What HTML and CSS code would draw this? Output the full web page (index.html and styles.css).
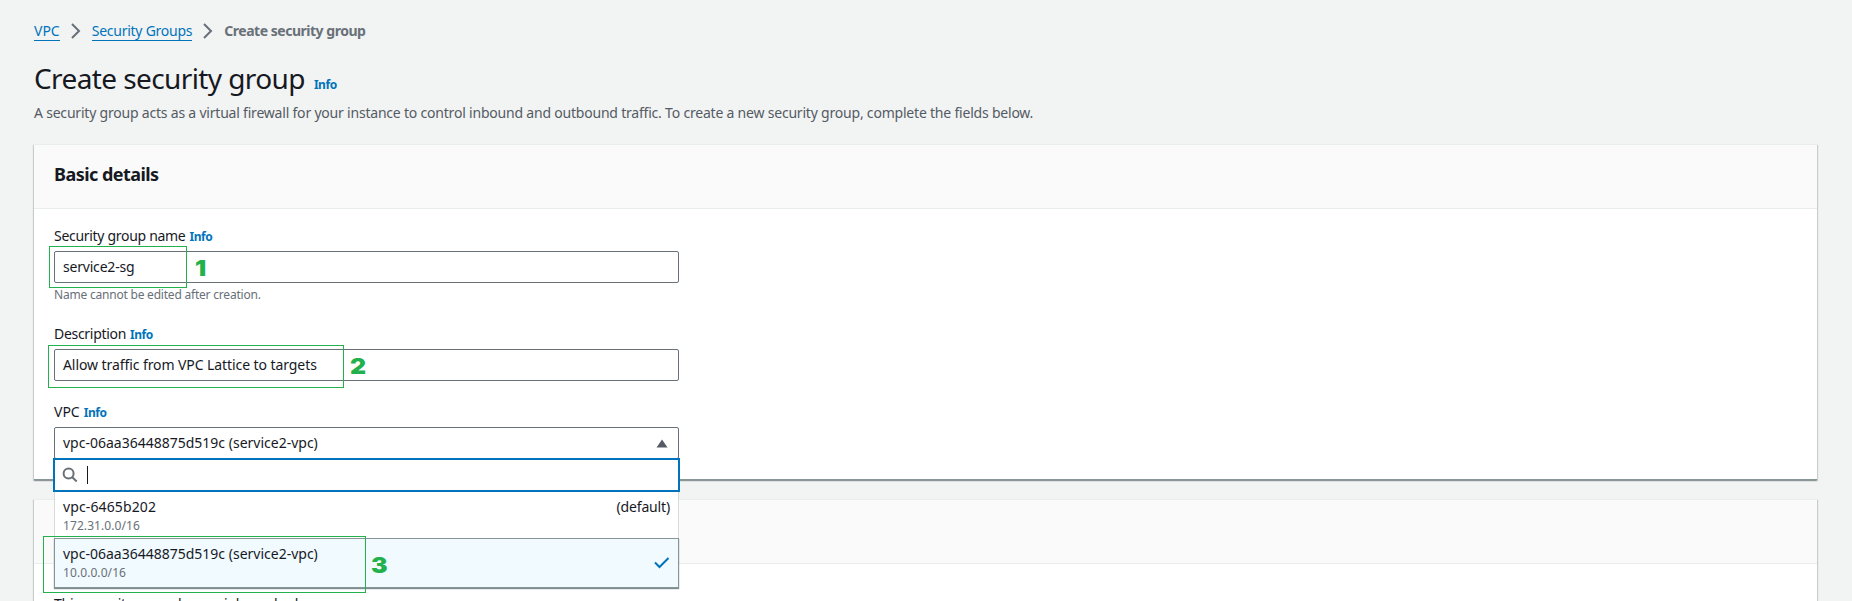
FILE: index.html
```html
<!DOCTYPE html>
<html lang="en">
<head>
<meta charset="utf-8">
<title>Create security group</title>
<link rel="stylesheet" href="styles.css">
</head>
<body>
<main class="page">
  <nav class="breadcrumbs">
    <a class="crumb crumb-vpc">VPC</a>
    <svg class="chevron" width="10" height="16" viewBox="0 0 10 16"><path d="M1 1l7 7-7 7"/></svg>
    <a class="crumb crumb-groups">Security Groups</a>
    <svg class="chevron" width="10" height="16" viewBox="0 0 10 16"><path d="M1 1l7 7-7 7"/></svg>
    <span class="current">Create security group</span>
  </nav>
  <header class="heading">
    <h1><span class="title">Create security group</span><a class="info">Info</a></h1>
    <p class="intro">A security group acts as a virtual firewall for your instance to control inbound and outbound traffic. To create a new security group, complete the fields below.</p>
  </header>

  <section class="card basic">
    <div class="card-header"><h2>Basic details</h2></div>
    <div class="card-body">
      <div class="field field-name">
        <div class="label"><span class="label-name">Security group name</span><a class="info">Info</a></div>
        <div class="input"><span class="value-name">service2-sg</span>
          <div class="mark mark-1"></div><div class="num num-1">1</div>
        </div>
        <div class="hint">Name cannot be edited after creation.</div>
      </div>
      <div class="field field-desc">
        <div class="label"><span class="label-desc">Description</span><a class="info">Info</a></div>
        <div class="input"><span class="value-desc">Allow traffic from VPC Lattice to targets</span>
          <div class="mark mark-2"></div><div class="num num-2">2</div>
        </div>
      </div>
      <div class="field">
        <div class="label"><span class="label-vpc">VPC</span><a class="info">Info</a></div>
        <div class="input select"><span class="vpc-id">vpc-06aa36448875d519c (service2-vpc)</span>
          <svg class="caret" width="12" height="9" viewBox="0 0 12 9"><path d="M6 0.5L11.5 8.5H0.5z"/></svg>
          <div class="dropdown">
            <div class="search">
              <svg class="glass" width="16" height="16" viewBox="0 0 16 16"><circle cx="6.6" cy="6.6" r="5"/><path d="M10.3 10.3l4.4 4.2"/></svg>
              <span class="cursor"></span>
            </div>
            <div class="option">
              <div class="row"><span class="vpc-short">vpc-6465b202</span><span class="default">(default)</span></div>
              <div class="cidr">172.31.0.0/16</div>
            </div>
            <div class="option selected">
              <div class="choice"><div class="row"><span class="vpc-id">vpc-06aa36448875d519c (service2-vpc)</span></div>
              <div class="cidr">10.0.0.0/16</div></div>
              <svg class="check" width="16" height="12" viewBox="0 0 16 12"><path d="M1 5.5l4.5 4.5L14.5 1"/></svg>
              <div class="mark mark-3"></div><div class="num num-3">3</div>
            </div>
          </div>
        </div>
      </div>
    </div>
  </section>

  <section class="card rules">
    <div class="card-header"></div>
    <div class="rules-body">This security group has no inbound rules.</div>
  </section>
</main>
</body>
</html>
```
FILE: styles.css
```css
* { box-sizing: border-box; }
body {
  margin: 0; height: 601px; overflow: hidden;
  background: #f2f3f3; color: #16191f;
  font: 14px/22px "Noto Sans", "Open Sans", sans-serif;
}
.page { height: 601px; overflow: hidden; padding: 20px 35px 0 34px; white-space: nowrap; }
.breadcrumbs { display: flex; align-items: center; height: 22px; }
.crumb { color: #0073bb; line-height: 19px; border-bottom: 1px solid #0073bb; }
.crumb-groups { letter-spacing: -.25px; }
.chevron { margin: 0 11px; fill: none; stroke: #687078; stroke-width: 2; }
.current { color: #687078; font-weight: 700; letter-spacing: -.48px; }
.heading { padding-top: 18px; height: 102px; }
h1 { margin: 0; display: flex; align-items: baseline; font-size: 28px; line-height: 36px; font-weight: 400; }
.title { letter-spacing: -.6px; }
.info { color: #0073bb; font-size: 12px; line-height: 16px; font-weight: 700; margin-left: 4px; letter-spacing: -.45px; }
h1 .info { margin-left: 9px; }
.intro { margin: 6px 0 0; color: #545b64; letter-spacing: -.205px; }
.card {
  background: #fff; border-top: 1px solid #eaeded;
  box-shadow: 0 1px 1px 0 rgba(0,28,36,.2), 1px 1px 1px 0 rgba(0,28,36,.15), -1px 1px 1px 0 rgba(0,28,36,.15);
}
.card-header { height: 64px; padding: 18px 20px; background: #fafafa; border-bottom: 1px solid #eaeded; }
h2 { margin: 0; font-size: 18px; line-height: 22px; font-weight: 700; letter-spacing: -.54px; }
.basic { height: 336px; border-bottom: 1px solid #879596; }
.card-body { padding: 16px 20px; }
.label { display: flex; align-items: baseline; height: 26px; line-height: 22px; }
.label-name, .label-desc { letter-spacing: -.3px; }
.input { position: relative; display: flex; align-items: center; width: 625px; height: 32px; padding: 0 8px; border: 1px solid #687078; border-radius: 2px; background: #fff; }
.value-name { letter-spacing: -.2px; }
.value-desc { letter-spacing: -.08px; }
.field-name { height: 98px; }
.field-desc { height: 78px; }
.hint { font-size: 12px; line-height: 16px; margin-top: 4px; color: #687078; letter-spacing: -.21px; }
.select { justify-content: space-between; }
.caret { margin-right: 2px; fill: #545b64; }
.dropdown { position: absolute; z-index: 2; left: -2px; top: 30px; width: 627px; }
.search { display: flex; align-items: center; height: 34px; padding-left: 7px; border: 2px solid #0073bb; background: #fff; }
.glass { fill: none; stroke: #687078; stroke-width: 2; }
.cursor { width: 1px; height: 18px; margin-left: 9px; background: #16191f; }
.option { height: 46px; margin: 0 1px; padding: 4px 8px 0; background: #fff; border-left: 1px solid #d5dbdb; border-right: 1px solid #d5dbdb; }
.row { display: flex; justify-content: space-between; line-height: 22px; }
.vpc-short { letter-spacing: .12px; }
.default { letter-spacing: -.15px; }
.cidr { font-size: 12px; line-height: 16px; color: #687078; letter-spacing: .08px; }
.selected { position: relative; display: flex; align-items: center; justify-content: space-between; height: 50px; padding: 0 8px; background: #f1faff; border: 1px solid #879596; box-shadow: 0 1px 1px rgba(0,28,36,.5); }
.choice { padding-bottom: 2px; }
.check { fill: none; stroke: #0073bb; stroke-width: 2; }
.mark { position: absolute; z-index: 3; border: 1px solid #22b14c; }
.mark-1 { left: -6px; top: -6px; width: 138px; height: 42px; }
.mark-2 { left: -7px; top: -5px; width: 296px; height: 43px; }
.mark-3 { left: -12px; top: -3px; width: 323px; height: 57px; }
.num { position: absolute; z-index: 3; color: #22b14c; font: 900 22px/22px Inter, sans-serif; transform: scaleX(1.13); transform-origin: 0 50%; }
.num-1 { left: 140px; top: 5px; }
.num-2 { left: 295px; top: 5px; }
.num-3 { left: 316px; top: 15px; }
.rules { margin-top: 19px; height: 130px; }
.rules-body { padding: 29px 20px 0; letter-spacing: -.25px; }
```
